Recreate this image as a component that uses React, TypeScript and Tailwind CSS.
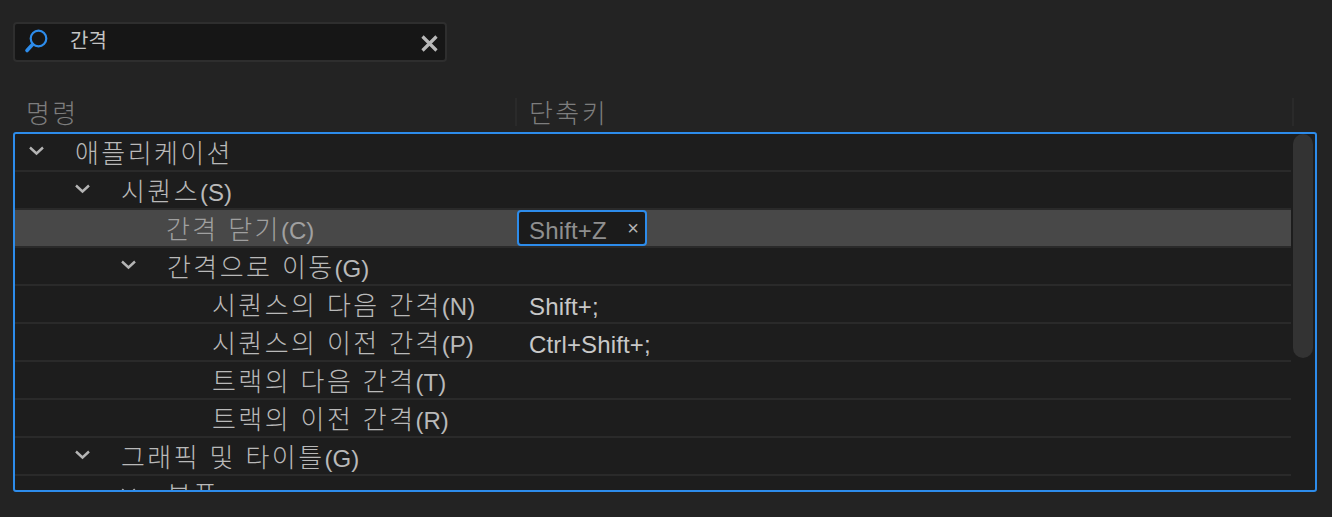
const rows = [
  { pad: 'pl-[13px]', open: true, ko: '애플리케이션', en: '' },
  { pad: 'pl-[59px]', open: true, ko: '시퀀스', en: '(S)' },
  { pad: 'pl-[151px]', ko: '간격 닫기', en: '(C)', chip: 'Shift+Z', selected: true },
  { pad: 'pl-[105px]', open: true, ko: '간격으로 이동', en: '(G)' },
  { pad: 'pl-[197px]', ko: '시퀀스의 다음 간격', en: '(N)', keys: 'Shift+;' },
  { pad: 'pl-[197px]', ko: '시퀀스의 이전 간격', en: '(P)', keys: 'Ctrl+Shift+;' },
  { pad: 'pl-[197px]', ko: '트랙의 다음 간격', en: '(T)' },
  { pad: 'pl-[197px]', ko: '트랙의 이전 간격', en: '(R)' },
  { pad: 'pl-[59px]', open: true, ko: '그래픽 및 타이틀', en: '(G)' },
  { pad: 'pl-[105px]', open: true, ko: '부품', en: '' },
]

function Chevron() {
  return (
    <svg width="17" height="10" viewBox="0 0 17 10" fill="none" className="mr-[30px] shrink-0 -translate-y-[1px]">
      <path d="M2 1.5 L8.5 7.5 L15 1.5" stroke="#b4b4b4" strokeWidth="2.4" />
    </svg>
  )
}

export default function App() {
  return (
    <div className="h-[517px] w-[1332px] overflow-hidden bg-[#232323] pl-[13px] pt-[22px] font-['Liberation_Sans','Noto_Sans_CJK_KR',sans-serif] text-[24px] text-[#b9b9b9]">
      {/* search */}
      <div className="flex h-[40px] w-[434px] items-center rounded-[4px] border-2 border-[#2e2e2e] bg-[#161616]">
        <svg width="26" height="26" viewBox="0 0 26 26" fill="none" className="ml-[9px] shrink-0">
          <circle cx="14.5" cy="9.5" r="7.8" stroke="#2d8ceb" strokeWidth="2.2" />
          <path d="M8.5 15.5 L3 21.5" stroke="#2d8ceb" strokeWidth="3.6" strokeLinecap="round" />
        </svg>
        <span className="ml-[20px] -translate-y-[1px] text-[20px] text-[#c4c4c4]">간격</span>
        <svg width="19" height="19" viewBox="0 0 19 19" fill="none" className="ml-auto mr-[6px] translate-y-[1px]">
          <path d="M2.5 2.5 L16.5 16.5 M16.5 2.5 L2.5 16.5" stroke="#b8b8b8" strokeWidth="3.2" />
        </svg>
      </div>

      {/* column headers */}
      <div className="mt-[36px] flex h-[28px] w-[1281px] items-center text-[#7d7d7d]">
        <div className="w-[502px] pl-[13px] pt-[5px] text-[26px] font-light tracking-[2.4px]">명령</div>
        <div className="flex h-full w-[777px] items-center border-l-2 border-[#2a2a2a] pl-[12px] pt-[5px] text-[26px] font-light tracking-[2.4px]">단축키</div>
        <div className="h-full w-[2px] bg-[#2a2a2a]" />
      </div>

      {/* tree */}
      <div className="mt-[6px] flex h-[360px] w-[1304px] overflow-hidden rounded-[3px] border-2 border-[#2d8ceb] bg-[#1d1d1d]">
        <div className="w-[1276px] shrink-0">
          {rows.map((row) => (
            <div key={row.ko} className="flex h-[38px] shrink-0 items-stretch border-b-2 border-[#2a2a2a]">
              <div className={`flex flex-1 ${row.selected ? 'bg-[#484848]' : ''}`}>
                <div className={`flex w-[501px] shrink-0 items-center ${row.pad}`}>
                  {row.open && <Chevron />}
                  <span className="whitespace-pre pt-[5px]">
                    <span className={`text-[26px] font-light tracking-[2.4px] ${row.selected ? 'text-[#a0a0a0]' : ''}`}>{row.ko}</span>
                    <span className={row.selected ? 'text-[#a0a0a0]' : ''}>{row.en}</span>
                  </span>
                </div>
                {row.chip && (
                  <div className="ml-[1px] flex w-[130px] items-center justify-between rounded-[4px] border-2 border-[#2d8ceb] bg-[#1b1b1b] pl-[10px] pr-[6px] tracking-[0.15px] text-[#8f8f8f]">
                    <span className="pt-[5px]">{row.chip}</span>
                    <span className="text-[20px] leading-none text-[#b4b4b4]">×</span>
                  </div>
                )}
                {row.keys && <div className="flex items-center pl-[13px] pt-[5px] tracking-[0.15px] text-[#c8c8c8]">{row.keys}</div>}
              </div>
            </div>
          ))}
        </div>
        <div className="ml-[2px] h-[224px] w-[20px] shrink-0 rounded-[10px] bg-[#333333]" />
      </div>
    </div>
  )
}
